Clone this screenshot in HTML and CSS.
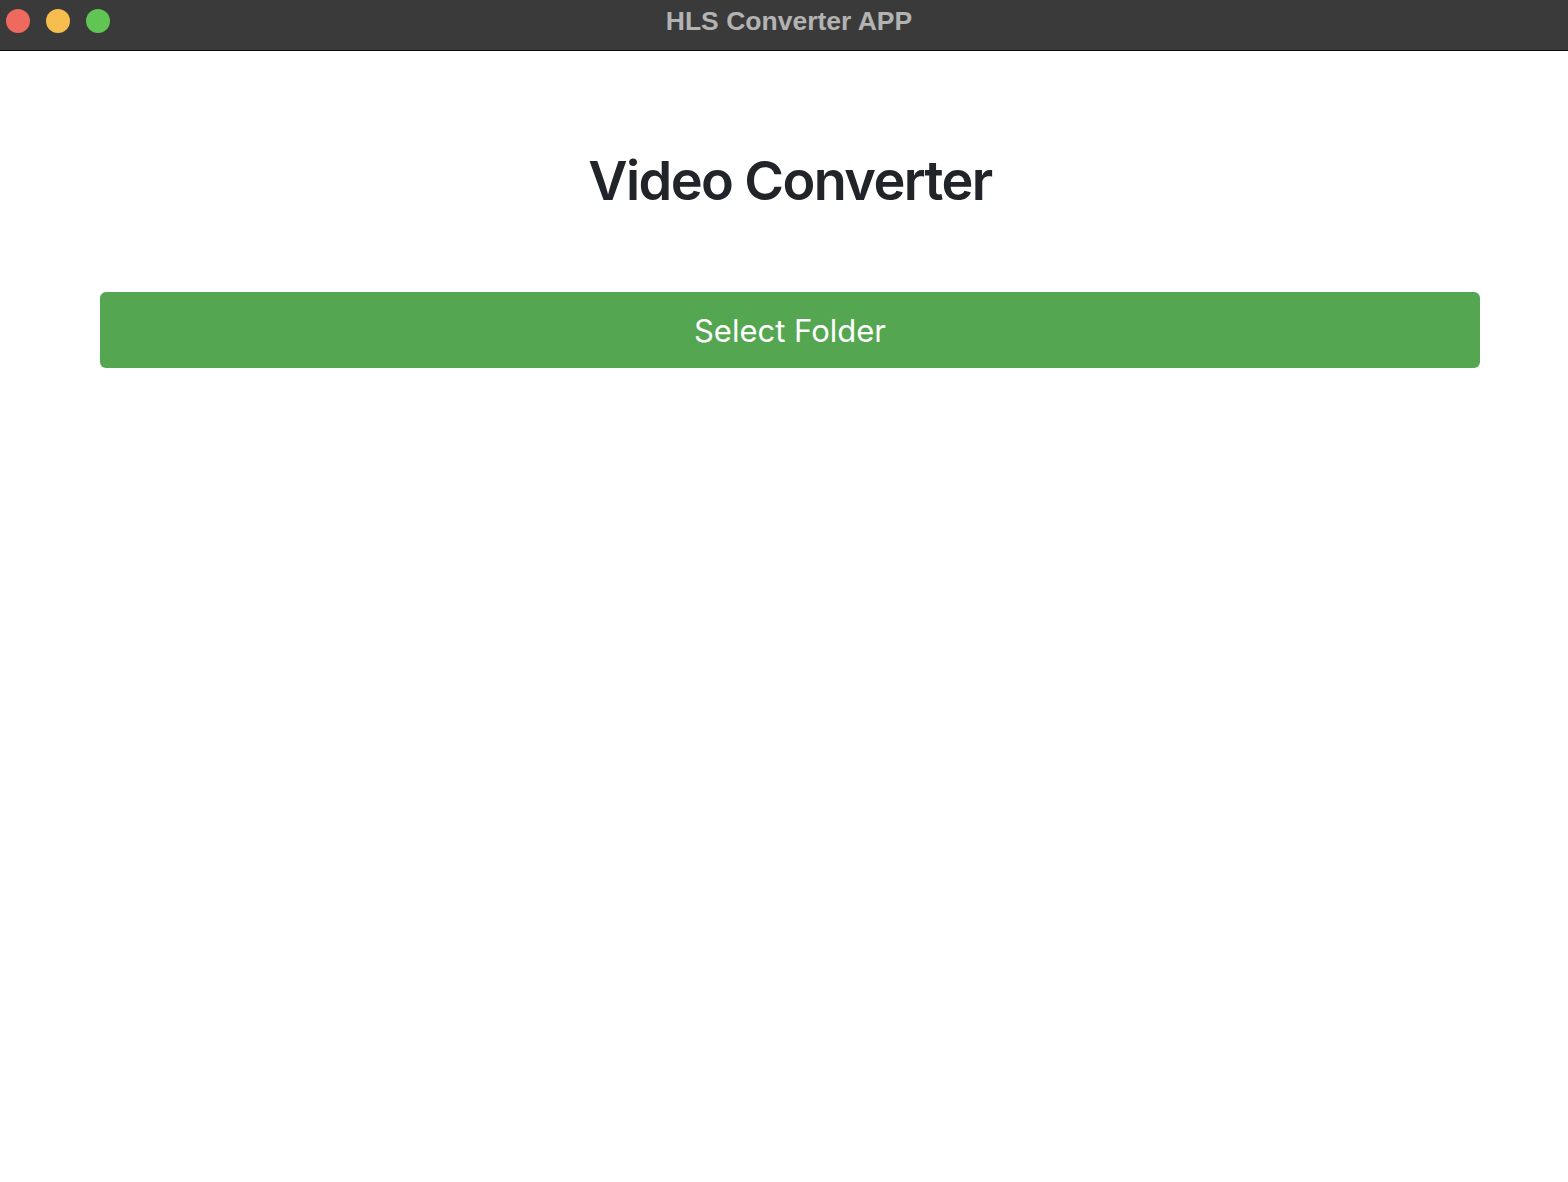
FILE: index.html
```html
<!DOCTYPE html>
<html lang="en">
<head>
<meta charset="utf-8">
<title>HLS Converter APP</title>
<link rel="stylesheet" href="styles.css">
</head>
<body>
<div class="window">
  <header class="titlebar">
    <div class="lights">
      <span class="light red"></span>
      <span class="light yellow"></span>
      <span class="light green"></span>
    </div>
    <div class="title">HLS Converter APP</div>
  </header>
  <main class="content">
    <h1 class="heading">Video Converter</h1>
    <button class="btn-select">Select Folder</button>
  </main>
</div>
</body>
</html>
```
FILE: styles.css
```css
* { box-sizing: border-box; }
html, body { margin: 0; padding: 0; background: #ffffff; }
body { font-family: Inter, "Noto Sans", sans-serif; }
.window { width: 1568px; min-height: 1182px; background: #fff; }
.titlebar {
  position: relative;
  height: 51px;
  background: #3a3a3a;
  border-bottom: 1px solid #0c0c0c;
  display: flex;
  align-items: center;
  justify-content: center;
}
.lights {
  position: absolute;
  left: 6px;
  top: 9px;
  display: flex;
  gap: 16px;
}
.light { width: 24px; height: 24px; border-radius: 50%; display: block; }
.red { background: #ee6a5f; }
.yellow { background: #f5be4f; }
.green { background: #61c554; }
.title {
  font-family: "Liberation Sans", Arial, sans-serif;
  font-weight: 700;
  font-size: 26.5px;
  color: #b3b3b3;
  margin-top: -8px;
  margin-left: 10px;
}
.content {
  padding: 0 88px 0 100px;
  display: flex;
  flex-direction: column;
  align-items: stretch;
}
.heading {
  margin: 96px 0 0;
  text-align: center;
  font-size: 54px;
  font-weight: 600;
  color: #212529;
  line-height: 68px;
  letter-spacing: -1.6px;
}
.btn-select {
  margin-top: 77px;
  height: 76px;
  border: none;
  border-radius: 6px;
  background: #54a651;
  color: #ffffff;
  font-family: Inter, "Noto Sans", sans-serif;
  font-size: 31px;
  font-weight: 400;
  padding: 0;
  cursor: pointer;
}
```
